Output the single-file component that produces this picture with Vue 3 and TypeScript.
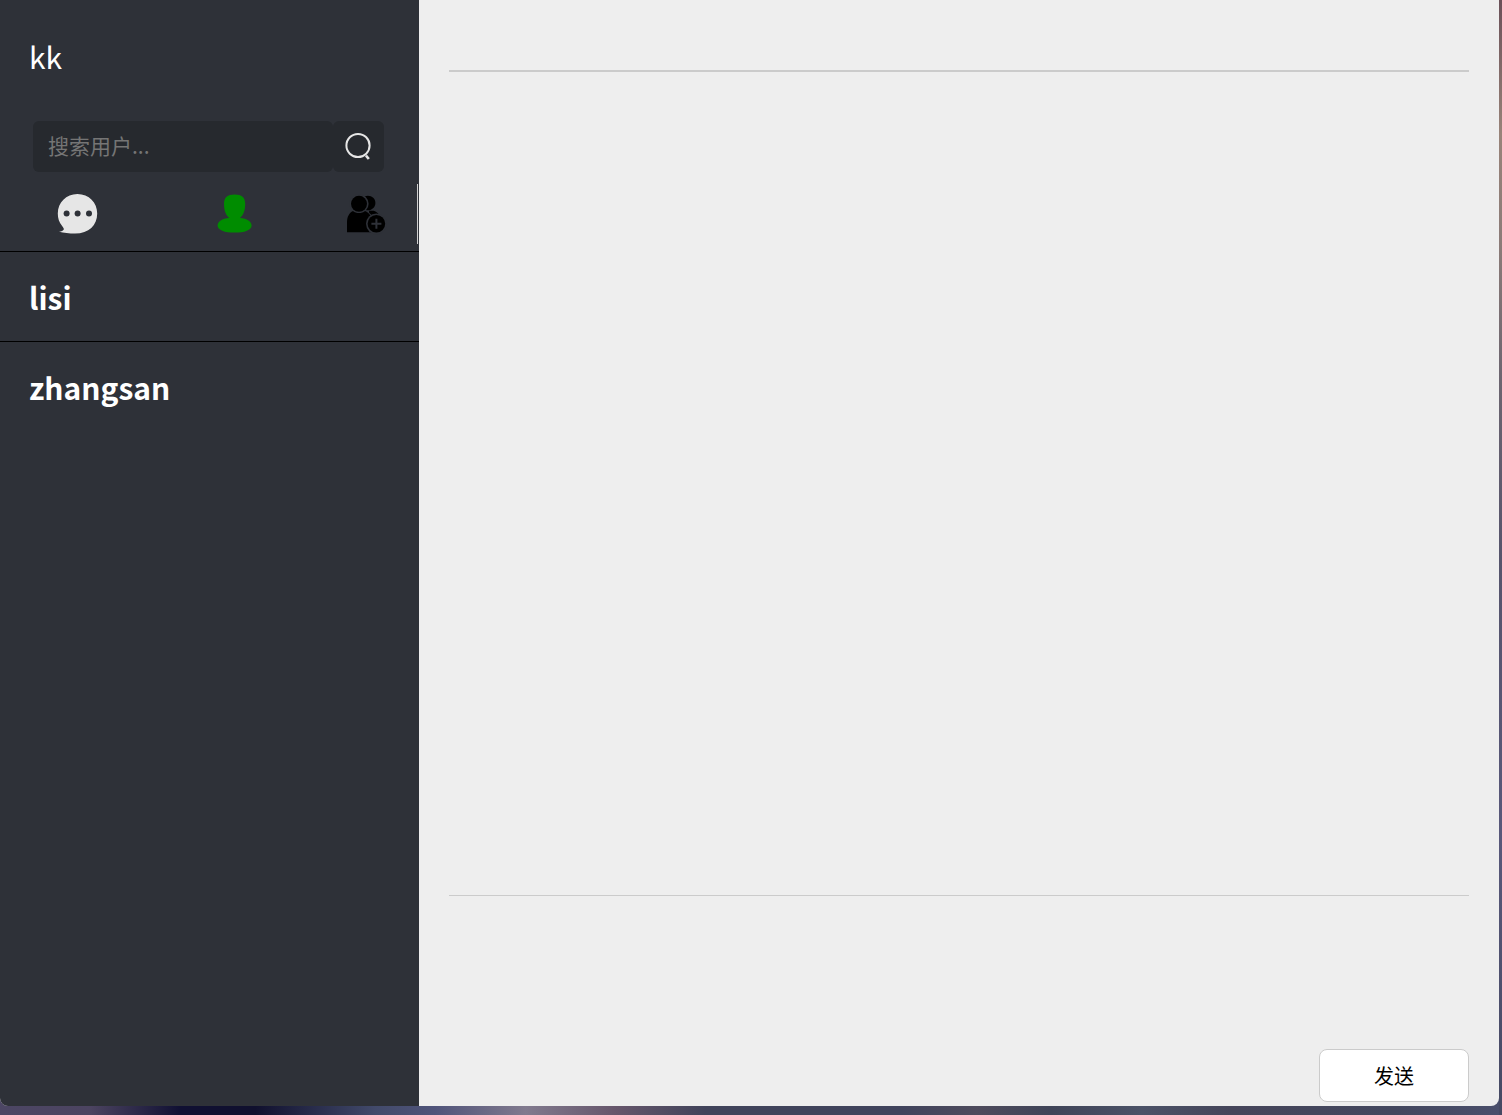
<script setup lang="ts">
import { ref } from 'vue'

interface Contact {
  id: number
  name: string
}

const userName = ref<string>('kk')
const keyword = ref<string>('')
const draft = ref<string>('')
const contacts = ref<Contact[]>([
  { id: 1, name: 'lisi' },
  { id: 2, name: 'zhangsan' },
])
</script>

<template>
  <div class="desktop">
    <div class="window">
      <aside class="sidebar">
        <header class="profile">{{ userName }}</header>

        <form class="search" @submit.prevent>
          <input v-model="keyword" type="text" placeholder="搜索用户..." aria-label="搜索用户" />
          <button type="submit" aria-label="搜索">
            <svg width="30" height="30" viewBox="0 0 30 30" fill="none" stroke="#e6e6e6">
              <circle cx="14" cy="13.500" r="11.600" stroke-width="2" />
              <path d="M22 23.600l2.800 3.400" stroke-width="2.600" />
            </svg>
          </button>
        </form>

        <nav class="tabs">
          <button type="button" aria-label="消息">
            <svg width="40" height="40" viewBox="0 0 40 40">
              <path
                fill="#e6e6e6"
                d="M19.400 0C31 0 39.200 8.600 39.200 19.400C39.200 31 31 39.400 17 39.600C11 39.600 6 39 1 37.800C3.400 37.400 5.200 36.600 5.800 35.400C6 34.600 5 33.400 3.800 31.600C1.200 28.200 -.200 24.400 -.200 19.400C-.200 8.600 8.200 0 19.400 0Z"
              />
              <g fill="#2e3138">
                <circle cx="8.600" cy="19.400" r="3" />
                <circle cx="19.600" cy="19.400" r="3" />
                <circle cx="31" cy="19.400" r="3" />
              </g>
            </svg>
          </button>
          <button type="button" aria-label="联系人">
            <svg width="40" height="40" viewBox="0 0 40 40">
              <path
                fill="#008c00"
                d="M19.600 .600C26.800 .600 30.200 3.400 30.200 10C30.200 16.600 28.400 21 25 24C32 24.600 36.600 27.600 36.600 31.400C36.600 36 29.600 38.600 19.600 38.600C9.600 38.600 2.600 36 2.600 31.400C2.600 27.600 7.200 24.600 14.200 24C10.800 21 9 16.600 9 10C9 3.400 12.400 .600 19.600 .600Z"
              />
            </svg>
          </button>
          <button type="button" aria-label="添加好友">
            <svg width="40" height="40" viewBox="0 0 40 40">
              <path d="M19.600 2.400C25 .200 30.400 3.600 30.400 9C30.400 12.200 28.200 15.200 24.600 16.200H20Z" />
              <path d="M24 16.800H28.600C31.400 17.600 33 19 34 21C29 20 26.600 21 24.400 23Z" />
              <circle cx="14" cy="9.800" r="9.600" fill="#2e3138" />
              <path d="M19.600 16L27 22.400" stroke="#2e3138" stroke-width="1.600" />
              <circle cx="14" cy="9.800" r="8" />
              <path d="M8 17C11 19.800 17 19.800 20 17C24.400 19 27.400 23 27.600 28V38.200H2V28C2 23 4 19 8 17Z" />
              <circle cx="31.400" cy="29.800" r="10.400" fill="#2e3138" />
              <circle cx="31.400" cy="29.800" r="8.800" />
              <path d="M31.400 24.800V34.800M26.400 29.800H36.400" stroke="#2e3138" stroke-width="2" />
            </svg>
          </button>
        </nav>

        <ul class="contacts">
          <li v-for="contact in contacts" :key="contact.id">{{ contact.name }}</li>
        </ul>
      </aside>

      <main class="chat">
        <header class="chat-title"></header>
        <section class="messages" aria-label="聊天记录"></section>
        <form class="composer" @submit.prevent>
          <textarea v-model="draft" aria-label="消息内容"></textarea>
          <button type="submit">发送</button>
        </form>
      </main>
    </div>
  </div>
</template>

<style>
body {
  margin: 0;
}
</style>

<style scoped>
* {
  box-sizing: border-box;
}

.desktop {
  display: flex;
  min-height: 100vh;
  padding: 0 3px 9px 0;
  font-family: 'Noto Sans CJK SC', sans-serif;
  background:
    linear-gradient(180deg, #6a5058 0, #988379 12%, #8b7b78 22%, #6c6570 34%, #56546c 50%, #58587a 75%, #454963 100%)
      right top / 3px 100% no-repeat,
    linear-gradient(90deg, #4c4664 0, #4c4461 6%, #101033 12%, #10102e 17%, #424a6b 25%, #50547a 29%, #817a8e 35%, #66566b 41%, #40435a 47%, #40435c 60%, #4e4b5c 65%, #3f4458 70%, #4b5267 76%, #45455a 82%, #43475e 93%, #4a4f6c 100%);
}

.window {
  display: flex;
  flex: 1;
  overflow: hidden;
  border-radius: 0 0 8px 8px;
  background: #eee;
}

.sidebar {
  flex: none;
  width: 419px;
  background: #2e3138;
  color: #fff;
}

.profile {
  padding: 32px 29px 41px;
  font-size: 30px;
  line-height: 48px;
}

.search {
  display: flex;
  padding: 0 33px;
}

.search input,
.search button {
  height: 51px;
  margin: 0;
  border: 0;
  border-radius: 6px;
  background: #26292e;
}

.search input {
  width: 300px;
  padding: 0 15px 3px;
  color: #fff;
  font-family: inherit;
  font-size: 21px;
  outline: none;
}

.search input::placeholder {
  color: #757575;
}

.search button {
  display: flex;
  align-items: center;
  justify-content: center;
  width: 51px;
  padding: 0;
}

.tabs {
  display: grid;
  grid-template-columns: 3fr 3fr 2fr;
  height: 60px;
  margin: 12px 1px 7px 0;
  border-right: 1px solid #d0d0d0;
}

.tabs button {
  display: flex;
  align-items: center;
  justify-content: center;
  padding: 0;
  border: 0;
  background: none;
}

.tabs svg {
  overflow: visible;
}

.contacts {
  margin: 0;
  padding: 0;
  list-style: none;
}

.contacts li {
  padding: 21px 29px 20px;
  border-top: 1px solid #000;
  font-size: 30px;
  font-weight: 700;
  line-height: 48px;
}

.chat {
  display: flex;
  flex: 1;
  flex-direction: column;
  padding: 0 30px 4px;
}

.chat-title {
  height: 72px;
  border-bottom: 2px solid #cbcbcb;
}

.messages {
  flex: 1;
}

.composer {
  display: flex;
  flex-direction: column;
  align-items: flex-end;
  border-top: 1px solid #cbcbcb;
}

.composer textarea {
  width: 100%;
  height: 153px;
  padding: 10px;
  border: 0;
  background: transparent;
  font-family: inherit;
  font-size: 20px;
  resize: none;
  outline: none;
}

.composer button {
  width: 150px;
  height: 53px;
  border: 1px solid #cbcbcb;
  border-radius: 8px;
  background: #fff;
  color: #000;
  font-family: inherit;
  font-size: 20px;
}
</style>
